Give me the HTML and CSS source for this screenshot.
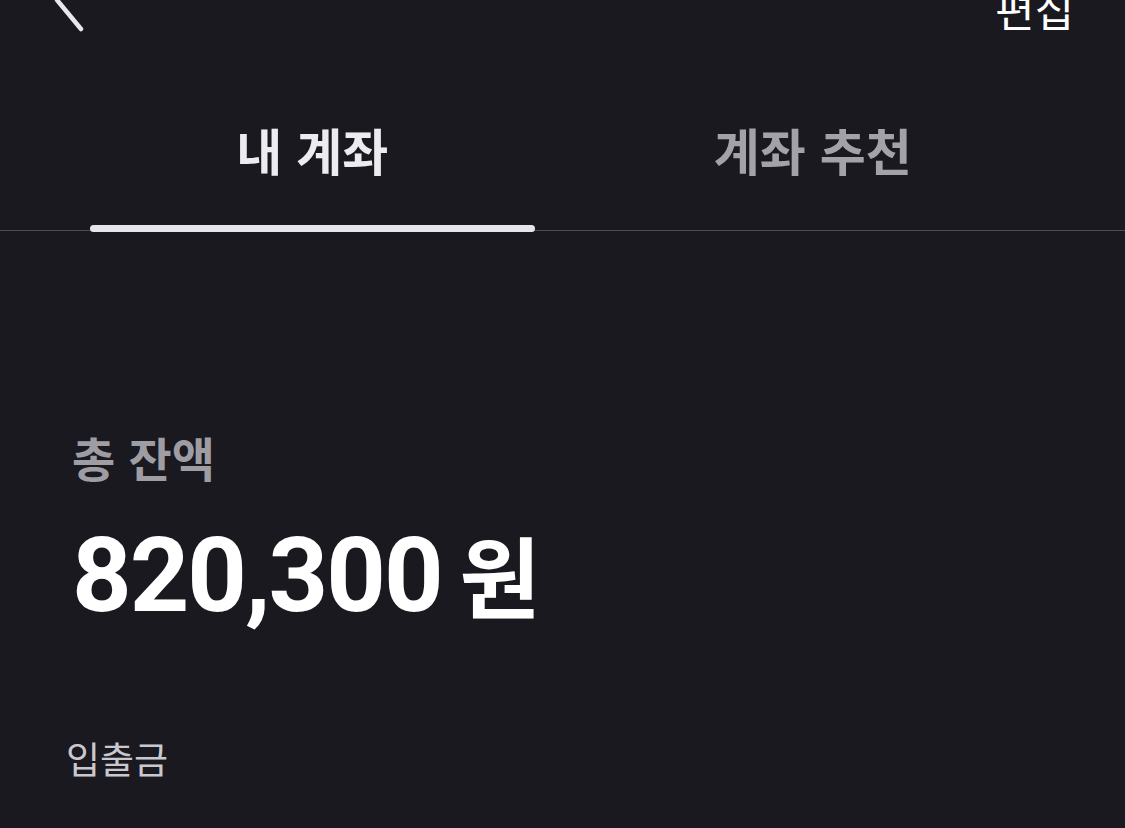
FILE: index.html
```html
<!DOCTYPE html>
<html lang="ko">

<head>
    <meta charset="UTF-8">
    <title>내 계좌</title>
    <link rel="stylesheet" href="styles.css">
</head>

<body>
    <div class="screen">
        <header class="topbar">
            <svg class="topbar__back" width="30" height="64" viewBox="0 0 30 64">
                <path d="M27 3 L3 32 L27 61" fill="none" stroke="#e8e8ec" stroke-width="4.5"
                    stroke-linecap="round" stroke-linejoin="round" />
            </svg>
            <span class="topbar__edit">편집</span>
        </header>

        <nav class="tabs">
            <div class="tabs__item tabs__item--active">내 계좌</div>
            <div class="tabs__item">계좌 추천</div>
        </nav>

        <section class="balance">
            <p class="balance__label">총 잔액</p>
            <p class="balance__amount">820,300 <span class="balance__unit">원</span></p>
        </section>

        <section class="group">
            <p class="group__title">입출금</p>
        </section>
    </div>
</body>

</html>
```

FILE: styles.css
```css
body {
    margin: 0;
    background-color: #1a1920;
    font-family: "Noto Sans CJK KR", sans-serif;
    color: #ffffff;
}

p {
    margin: 0;
}

.screen {
    height: 828px;
    overflow: hidden;
}

/* barra de topo, cortada pelo scroll */
.topbar {
    height: 34px;
    display: flex;
    align-items: flex-end;
    justify-content: space-between;
    padding: 0 51px 0 54px;
    overflow: hidden;
}

.topbar__back {
    flex: none;
    margin-bottom: 2px;
}

.topbar__edit {
    font-size: 43px;
    line-height: 43px;
    margin-bottom: 4px;
    color: #ffffff;
}

.tabs {
    display: flex;
    gap: 56px;
    padding: 0 90px;
    margin-top: 70px;
    border-bottom: 1px solid #4d4c53;
}

.tabs__item {
    flex: 1;
    text-align: center;
    font-size: 50px;
    font-weight: 700;
    line-height: 90px;
    height: 126px;
    color: #a3a2a8;
    position: relative;
}

.tabs__item--active {
    color: #ececf0;
}

/* indicador da aba ativa */
.tabs__item--active::after {
    content: "";
    position: absolute;
    left: 0;
    right: 0;
    bottom: -2px;
    height: 7px;
    border-radius: 4px;
    background-color: #e6e6ea;
}

.balance {
    padding: 196px 0 0 72px;
}

.balance__label {
    font-size: 47px;
    font-weight: 700;
    line-height: 60px;
    color: #9e9da4;
}

.balance__amount {
    margin-top: 26px;
    font-family: "Roboto", "Noto Sans CJK KR", sans-serif;
    font-size: 104px;
    font-weight: 700;
    line-height: 120px;
    letter-spacing: -2px;
    word-spacing: -6px;
    color: #ffffff;
}

.balance__unit {
    font-family: "Noto Sans CJK KR", sans-serif;
    font-size: 88px;
    letter-spacing: 0;
}

.group {
    padding: 100px 0 0 66px;
}

.group__title {
    font-size: 37px;
    font-weight: 400;
    line-height: 44px;
    color: #c9c8ce;
}
```
